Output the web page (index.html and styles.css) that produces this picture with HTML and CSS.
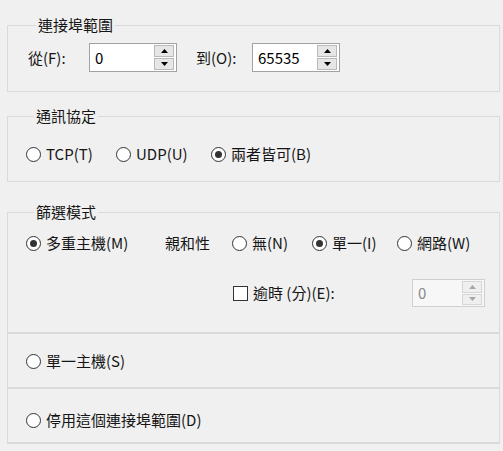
FILE: index.html
```html
<!DOCTYPE html>
<html lang="zh-Hant">
<head>
<meta charset="utf-8">
<title>連接埠範圍</title>
<link rel="stylesheet" href="styles.css">
</head>
<body>
<fieldset class="group g1">
  <legend>連接埠範圍</legend>
  <div class="row range-row">
    <span class="lbl lbl-from">從(F):</span>
    <div class="spin">
      <span class="spin-text">0</span>
      <span class="spin-btns">
        <span class="spin-btn"><svg width="7" height="4" viewBox="0 0 7 4"><path d="M0 4L3.5 0L7 4Z"/></svg></span>
        <span class="spin-btn"><svg width="7" height="4" viewBox="0 0 7 4"><path d="M0 0L3.5 4L7 0Z"/></svg></span>
      </span>
    </div>
    <span class="lbl lbl-to">到(O):</span>
    <div class="spin">
      <span class="spin-text">65535</span>
      <span class="spin-btns">
        <span class="spin-btn"><svg width="7" height="4" viewBox="0 0 7 4"><path d="M0 4L3.5 0L7 4Z"/></svg></span>
        <span class="spin-btn"><svg width="7" height="4" viewBox="0 0 7 4"><path d="M0 0L3.5 4L7 0Z"/></svg></span>
      </span>
    </div>
  </div>
</fieldset>

<fieldset class="group g2">
  <legend>通訊協定</legend>
  <div class="row proto-row">
    <label class="opt w90"><span class="radio"></span>TCP(T)</label>
    <label class="opt w95"><span class="radio"></span>UDP(U)</label>
    <label class="opt"><span class="radio on"></span>兩者皆可(B)</label>
  </div>
</fieldset>

<fieldset class="group g3">
  <legend>篩選模式</legend>
  <div class="row mode-row">
    <label class="opt w139"><span class="radio on"></span>多重主機(M)</label>
    <span class="lbl w67">親和性</span>
    <label class="opt w80"><span class="radio"></span>無(N)</label>
    <label class="opt w85"><span class="radio on"></span>單一(I)</label>
    <label class="opt"><span class="radio"></span>網路(W)</label>
  </div>
  <div class="row timeout-row">
    <label class="opt"><span class="check"></span>逾時 (分)(E):</label>
    <div class="spin spin-small disabled">
      <span class="spin-text">0</span>
      <span class="spin-btns">
        <span class="spin-btn"><svg width="7" height="4" viewBox="0 0 7 4"><path d="M0 4L3.5 0L7 4Z"/></svg></span>
        <span class="spin-btn"><svg width="7" height="4" viewBox="0 0 7 4"><path d="M0 0L3.5 4L7 0Z"/></svg></span>
      </span>
    </div>
  </div>
</fieldset>

<div class="panel pa">
  <label class="opt"><span class="radio"></span>單一主機(S)</label>
</div>
<div class="panel pb">
  <label class="opt"><span class="radio"></span>停用這個連接埠範圍(D)</label>
</div>
</body>
</html>
```

FILE: styles.css
```css
html, body {
  margin: 0;
  padding: 0;
  background: #f0f0f0;
}
body {
  font-family: "Noto Sans CJK TC", "Noto Sans", sans-serif;
  font-size: 15px;
  line-height: 20px;
  color: #151515;
  padding-top: 15px;
}
.group {
  margin: 0 3px 0 7px;
  border: 1px solid #dadada;
  padding: 0;
  min-inline-size: 0;
}
.group legend {
  margin-left: 8px;
  padding: 0 2px;
  line-height: 20px;
  height: 20px;
}
.g1 { padding: 8px 0 19px 20px; }
.g2 { margin-top: 14px; padding: 18px 0 17px 18px; }
.g3 { margin-top: 20px; padding: 11px 0 25px 18px; }

.row {
  display: flex;
  align-items: center;
}
.lbl { white-space: nowrap; }
.lbl-from { width: 61px; }
.lbl-to { margin-left: 19px; width: 56px; }

.spin {
  box-sizing: border-box;
  width: 88px;
  height: 29px;
  border: 1px solid #a2a2a2;
  background: #fff;
  display: flex;
  align-items: stretch;
}
.spin-text {
  flex: 1;
  padding-left: 5px;
  line-height: 27px;
  color: #000;
}
.spin-btns {
  display: flex;
  flex-direction: column;
  gap: 1px;
  width: 20px;
  padding: 1px 2px 1px 0;
}
.spin-btn {
  flex: 1;
  border: 1px solid #b9b9b9;
  background: #e6e6e6;
  display: flex;
  align-items: center;
  justify-content: center;
}
.spin-btn svg { display: block; fill: #000; }

.spin.disabled {
  border-color: #cfcfcf;
  background: #f7f7f7;
}
.spin.disabled .spin-text { color: #8a8a8a; }
.spin.disabled .spin-btn {
  border-color: #d6d6d6;
  background: #efefef;
}
.spin.disabled .spin-btn svg { fill: #a6a6a6; }
.spin-small { width: 73px; height: 28px; margin-left: auto; margin-right: 14px; }
.spin-small .spin-text { line-height: 26px; }

.opt {
  display: flex;
  align-items: center;
  white-space: nowrap;
}
.radio {
  box-sizing: border-box;
  width: 15px;
  height: 15px;
  border: 1px solid #333;
  border-radius: 50%;
  background: #fff;
  margin-right: 5px;
  display: flex;
  align-items: center;
  justify-content: center;
  flex: none;
}
.radio.on::after {
  content: "";
  width: 7px;
  height: 7px;
  border-radius: 50%;
  background: #333;
}
.check {
  box-sizing: border-box;
  width: 15px;
  height: 15px;
  border: 1px solid #333;
  background: #fff;
  margin-right: 5px;
  flex: none;
}
.w90 { width: 90px; }
.w95 { width: 95px; }
.w139 { width: 139px; }
.w67 { width: 67px; }
.w80 { width: 80px; }
.w85 { width: 85px; }

.mode-row { height: 20px; }
.timeout-row {
  margin-top: 26px;
  padding-left: 207px;
}

.panel {
  margin: 0 3px 0 7px;
  border-left: 1px solid #dadada;
  border-right: 1px solid #dadada;
  padding-left: 18px;
}
.pa {
  border-top: 1px solid #dadada;
  padding-top: 17px;
  padding-bottom: 16px;
}
.pb {
  border-top: 2px solid #dadada;
  border-bottom: 2px solid #dadada;
  padding-top: 21px;
  padding-bottom: 12px;
}
```
